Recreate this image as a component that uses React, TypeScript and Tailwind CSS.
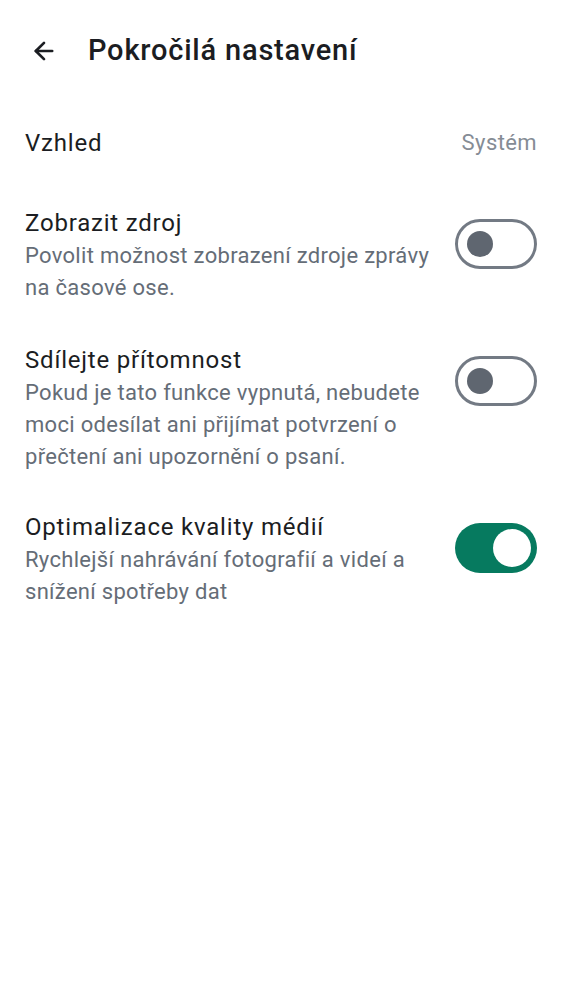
import { ArrowLeft } from "lucide-react";

function Toggle({ on }: { on: boolean }) {
  return on ? (
    <div className="w-[82px] h-[50px] rounded-full bg-[#067a5f] flex items-center justify-end pr-[6px] shrink-0">
      <div className="w-[38px] h-[38px] rounded-full bg-white" />
    </div>
  ) : (
    <div className="w-[82px] h-[50px] rounded-full border-[3px] border-[#737a84] bg-white flex items-center pl-[9px] shrink-0">
      <div className="w-[26px] h-[26px] rounded-full bg-[#5f6670]" />
    </div>
  );
}

const rows = [
  {
    title: "Zobrazit zdroj",
    desc: "Povolit možnost zobrazení zdroje zprávy na časové ose.",
    on: false,
    mt: "mt-[48px]",
  },
  {
    title: "Sdílejte přítomnost",
    desc: "Pokud je tato funkce vypnutá, nebudete moci odesílat ani přijímat potvrzení o přečtení ani upozornění o psaní.",
    on: false,
    mt: "mt-[40px]",
  },
  {
    title: "Optimalizace kvality médií",
    desc: "Rychlejší nahrávání fotografií a videí a snížení spotřeby dat",
    on: true,
    mt: "mt-[38px]",
  },
];

export default function App() {
  return (
    <div className="min-h-screen w-full bg-white text-[#1b1d22] font-['Roboto','Noto_Sans',sans-serif]">
      {/* top bar */}
      <div className="h-[98px] pt-[4px] flex items-center px-[30px]">
        <ArrowLeft size={28} strokeWidth={2.3} className="text-[#1b1d22]" />
        <h1 className="ml-[30px] text-[29px] font-medium tracking-[0.8px]">Pokročilá nastavení</h1>
      </div>

      <div className="px-[25px]">
        <div className="mt-[29px] flex items-center justify-between">
          <span className="text-[24px] leading-[32px] tracking-[0.8px]">Vzhled</span>
          <span className="text-[22px] leading-[32px] text-[#858c95] tracking-[0.4px]">Systém</span>
        </div>

        {rows.map((r) => (
          <div key={r.title} className={`${r.mt} flex items-start justify-between gap-[20px]`}>
            <div className="flex-1 min-w-0">
              <div className="text-[24px] leading-[33px] tracking-[0.8px]">{r.title}</div>
              <div className="text-[22px] leading-[32px] text-[#656d77] tracking-[0.3px]">
                {r.desc}
              </div>
            </div>
            <div className="mt-[12px]">
              <Toggle on={r.on} />
            </div>
          </div>
        ))}
      </div>
    </div>
  );
}
